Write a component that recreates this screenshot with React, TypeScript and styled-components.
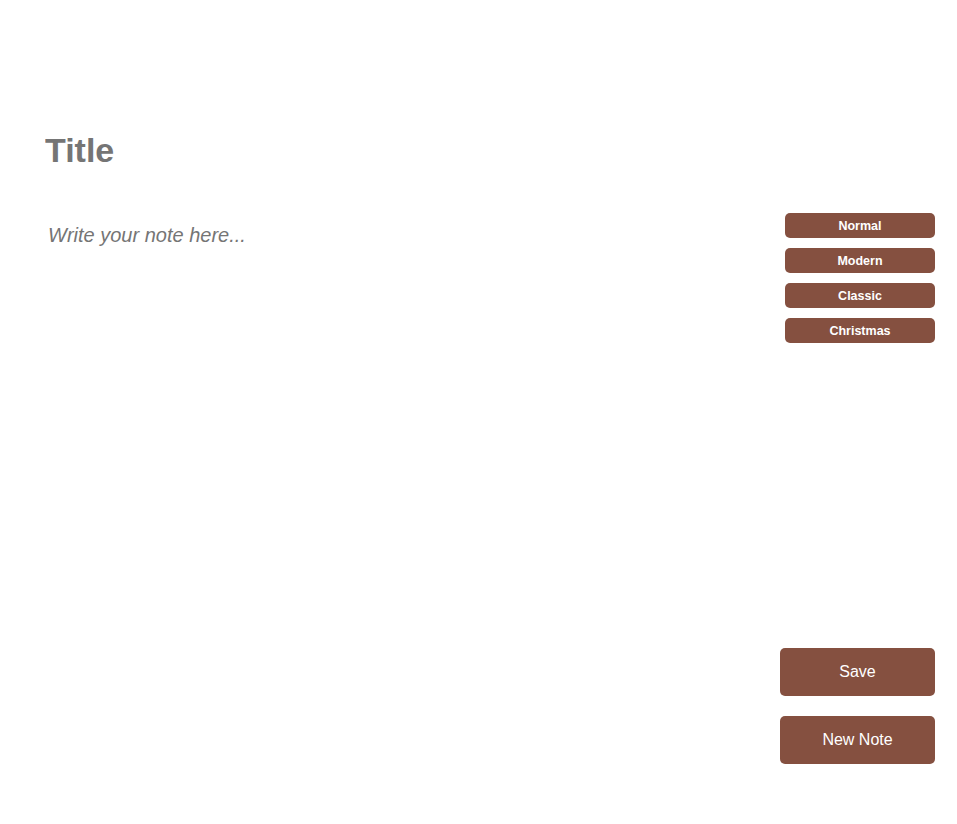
import React from "react";
import styled, { createGlobalStyle } from "styled-components";

const Global = createGlobalStyle`
  html, body {
    margin: 0;
    padding: 0;
    background: #ffffff;
    font-family: "Liberation Sans", Arial, sans-serif;
  }
  * { box-sizing: border-box; }
`;

const Page = styled.div`
  display: flex;
  height: 100vh;
  width: 100%;
`;

const Editor = styled.main`
  flex: 1;
  display: flex;
  flex-direction: column;
  padding: 131px 0 0 45px;
`;

const TitleInput = styled.input`
  font-family: "Liberation Sans", Arial, sans-serif;
  font-size: 34px;
  font-weight: bold;
  height: 39px;
  border: none;
  outline: none;
  padding: 0;
  color: #757575;
  background: transparent;
  &::placeholder {
    color: #757575;
    opacity: 1;
  }
`;

const NoteArea = styled.textarea`
  margin-top: 54px;
  margin-left: 3px;
  flex: 1;
  font-family: "Liberation Sans", Arial, sans-serif;
  font-size: 20px;
  font-style: italic;
  border: none;
  outline: none;
  resize: none;
  padding: 0;
  color: #333;
  background: transparent;
  &::placeholder {
    color: #757575;
    opacity: 1;
  }
`;

const Sidebar = styled.aside`
  width: 155px;
  margin-right: 22px;
  display: flex;
  flex-direction: column;
  justify-content: space-between;
  align-items: flex-end;
  padding: 213px 0 60px;
`;

const ThemeList = styled.div`
  display: flex;
  flex-direction: column;
  gap: 10px;
`;

const ThemeButton = styled.button`
  width: 150px;
  height: 25px;
  border: none;
  border-radius: 5px;
  background: #855040;
  color: #ffffff;
  font-family: "Liberation Sans", Arial, sans-serif;
  font-size: 12.5px;
  font-weight: bold;
  cursor: pointer;
  padding: 0;
`;

const ActionList = styled.div`
  display: flex;
  flex-direction: column;
  gap: 20px;
`;

const ActionButton = styled.button`
  width: 155px;
  height: 48px;
  border: none;
  border-radius: 5px;
  background: #855040;
  color: #ffffff;
  font-family: "Liberation Sans", Arial, sans-serif;
  font-size: 16px;
  cursor: pointer;
  padding: 0;
`;

const themes = ["Normal", "Modern", "Classic", "Christmas"];

export default function App() {
  return (
    <>
      <Global />
      <Page>
        <Editor>
          <TitleInput placeholder="Title" />
          <NoteArea placeholder="Write your note here..." autoFocus />
        </Editor>
        <Sidebar>
          <ThemeList>
            {themes.map((t) => (
              <ThemeButton key={t}>{t}</ThemeButton>
            ))}
          </ThemeList>
          <ActionList>
            <ActionButton>Save</ActionButton>
            <ActionButton>New Note</ActionButton>
          </ActionList>
        </Sidebar>
      </Page>
    </>
  );
}
